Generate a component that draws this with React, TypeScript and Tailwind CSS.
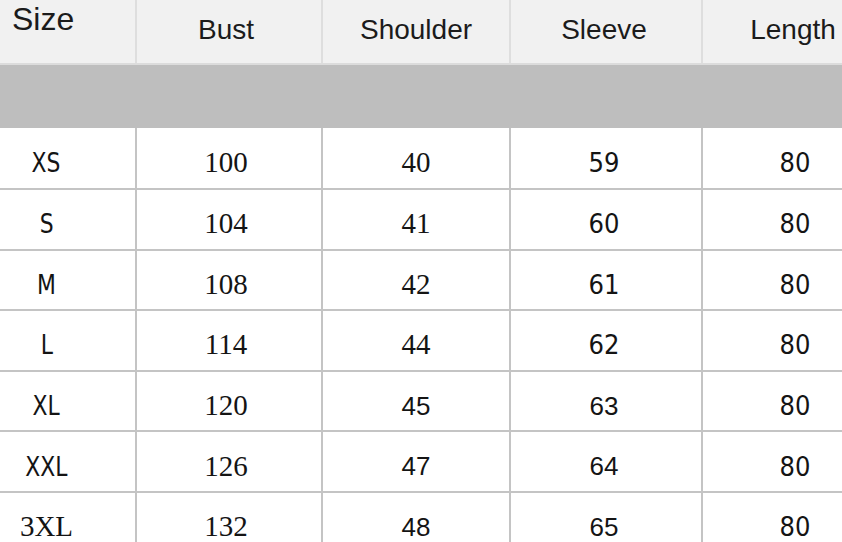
const serif = "font-['Liberation_Serif','Times_New_Roman',serif] text-[29px]";
const sans = "font-['Liberation_Sans',Arial,sans-serif] text-[26px]";
const narrow =
  "font-['Liberation_Sans_Narrow','DejaVu_Sans_Condensed','Liberation_Sans',sans-serif] text-[27px]";

type Cell = { v: string; f: string };

const rows: Cell[][] = [
  [{ v: 'XS', f: narrow }, { v: '100', f: serif }, { v: '40', f: serif }, { v: '59', f: narrow }, { v: '80', f: narrow }],
  [{ v: 'S', f: narrow }, { v: '104', f: serif }, { v: '41', f: serif }, { v: '60', f: narrow }, { v: '80', f: narrow }],
  [{ v: 'M', f: narrow }, { v: '108', f: serif }, { v: '42', f: serif }, { v: '61', f: narrow }, { v: '80', f: narrow }],
  [{ v: 'L', f: narrow }, { v: '114', f: serif }, { v: '44', f: serif }, { v: '62', f: narrow }, { v: '80', f: narrow }],
  [{ v: 'XL', f: narrow }, { v: '120', f: serif }, { v: '45', f: sans }, { v: '63', f: sans }, { v: '80', f: narrow }],
  [{ v: 'XXL', f: narrow }, { v: '126', f: serif }, { v: '47', f: sans }, { v: '64', f: sans }, { v: '80', f: narrow }],
  [{ v: '3XL', f: serif }, { v: '132', f: serif }, { v: '48', f: sans }, { v: '65', f: sans }, { v: '80', f: narrow }],
];

// column widths incl. the 2px right rule
const cols = ['w-[137px] pr-[42px]', 'w-[186px] pr-[6px]', 'w-[188px]', 'w-[192px] pr-[4px]', 'w-[186px]'];

export default function App() {
  return (
    <div className="w-[842px] h-[542px] overflow-hidden bg-white text-[#141414]">
      <div className="w-[889px]">
        {/* header */}
        <div className="flex h-[65px] bg-[#f1f1f1] border-b-2 border-[#dcdcdc] font-['Liberation_Sans',Arial,sans-serif] text-[28px] text-[#1b1b1b]">
          <div className="w-[137px] shrink-0 border-r-2 border-[#dedede] pl-[12px] pt-[1px] text-[32px] leading-[36px]">
            Size
          </div>
          {['Bust', 'Shoulder', 'Sleeve', 'Length'].map((h, i) => (
            <div
              key={h}
              className={
                (i === 0 ? 'w-[186px] pr-[6px]' : i === 1 ? 'w-[188px]' : i === 2 ? 'w-[192px] pr-[4px]' : 'w-[186px] pr-[4px]') +
                ' shrink-0 border-r-2 border-[#dedede] text-center pt-[13px] leading-[34px]'
              }
            >
              {h}
            </div>
          ))}
        </div>

        {/* empty grey band */}
        <div className="h-[63px] bg-[#bebebe]" />

        {/* data rows */}
        {rows.map((r, ri) => (
          <div
            key={ri}
            className={`flex ${ri === 0 ? 'h-[62px]' : 'h-[60.6px]'} border-b-2 border-[#c4c4c4]`}
          >
            {r.map((c, ci) => (
              <div
                key={ci}
                className={`${cols[ci]} shrink-0 border-r-2 border-[#c4c4c4] flex items-center justify-center pt-[9px]`}
              >
                <span className={`${c.f} leading-none ${ci === 0 && c.f === narrow ? 'inline-block scale-x-90' : ''}`}>
                  {c.v}
                </span>
              </div>
            ))}
          </div>
        ))}
      </div>
    </div>
  );
}
